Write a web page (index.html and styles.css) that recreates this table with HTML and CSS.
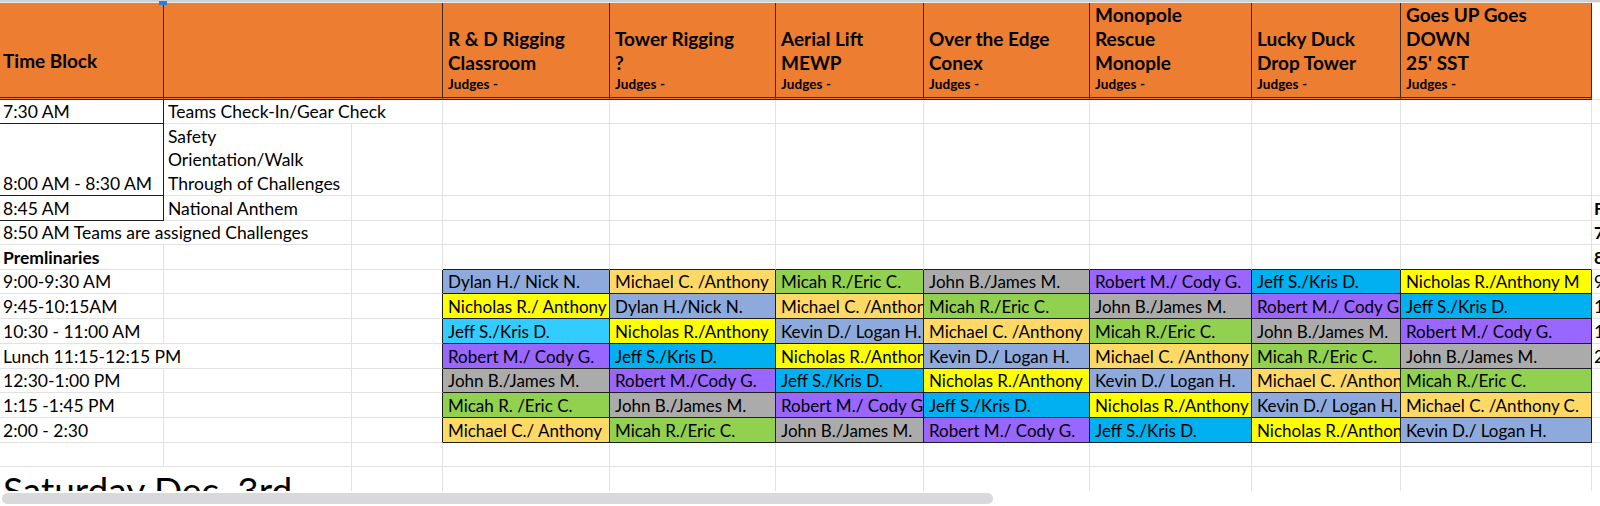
FILE: index.html
```html
<!DOCTYPE html>
<html>
<head>
<meta charset="utf-8">
<title>Schedule</title>
<link rel="stylesheet" href="styles.css">
</head>
<body>
<div class="window">
  <div class="topstrip"><span class="handle"></span></div>
  <div class="sheet">
    <table class="grid">
      <colgroup>
        <col class="c-a"><col class="c-b"><col class="c-c"><col class="c-d"><col class="c-e"><col class="c-f"><col class="c-g"><col class="c-h"><col class="c-i"><col class="c-j"><col class="c-k">
      </colgroup>
      <thead>
        <tr class="hdr">
          <th class="h tb">Time Block</th>
          <th class="h" colspan="2"></th>
          <th class="h"><div class="t">R &amp; D Rigging<br>Classroom</div><div class="j">Judges -</div></th>
          <th class="h"><div class="t">Tower Rigging<br>?</div><div class="j">Judges -</div></th>
          <th class="h"><div class="t">Aerial Lift<br>MEWP</div><div class="j">Judges -</div></th>
          <th class="h"><div class="t">Over the Edge<br>Conex</div><div class="j">Judges -</div></th>
          <th class="h"><div class="t">Monopole<br>Rescue<br>Monople</div><div class="j">Judges -</div></th>
          <th class="h"><div class="t">Lucky Duck<br>Drop Tower</div><div class="j">Judges -</div></th>
          <th class="h"><div class="t">Goes UP Goes<br>DOWN<br>25' SST</div><div class="j">Judges -</div></th>
          <th class="hk"></th>
        </tr>
      </thead>
      <tbody>
        <tr class="h24">
          <td class="boxed">7:30 AM</td>
          <td colspan="2">Teams Check-In/Gear Check</td>
          <td></td><td></td><td></td><td></td><td></td><td></td><td></td><td class="k"></td>
        </tr>
        <tr class="h72">
          <td class="boxed">8:00 AM - 8:30 AM</td>
          <td class="multi">Safety<br>Orientation/Walk<br>Through of Challenges</td>
          <td></td>
          <td></td><td></td><td></td><td></td><td></td><td></td><td></td><td class="k"></td>
        </tr>
        <tr class="h25">
          <td class="boxed">8:45 AM</td>
          <td>National Anthem</td>
          <td></td>
          <td></td><td></td><td></td><td></td><td></td><td></td><td></td><td class="k b">F</td>
        </tr>
        <tr class="h24">
          <td colspan="2">8:50 AM Teams are assigned Challenges</td>
          <td></td>
          <td></td><td></td><td></td><td></td><td></td><td></td><td></td><td class="k b">7</td>
        </tr>
        <tr class="h25">
          <td class="b">Premlinaries</td>
          <td></td>
          <td></td>
          <td class="ab"></td><td class="ab"></td><td class="ab"></td><td class="ab"></td><td class="ab"></td><td class="ab"></td><td class="ab"></td><td class="k b">8</td>
        </tr>
        <tr class="h24">
          <td>9:00-9:30 AM</td><td></td><td class="lb"></td>
          <td class="cb blu">Dylan H./ Nick N.</td>
          <td class="cb org">Michael C. /Anthony</td>
          <td class="cb grn">Micah R./Eric C.</td>
          <td class="cb gry">John B./James M.</td>
          <td class="cb pur">Robert M./ Cody G.</td>
          <td class="cb cyn">Jeff S./Kris D.</td>
          <td class="cb yel">Nicholas R./Anthony M</td>
          <td class="k">9</td>
        </tr>
        <tr class="h25">
          <td>9:45-10:15AM</td><td></td><td class="lb"></td>
          <td class="cb yel">Nicholas R./ Anthony</td>
          <td class="cb blu">Dylan H./Nick N.</td>
          <td class="cb org">Michael C. /Anthony</td>
          <td class="cb grn">Micah R./Eric C.</td>
          <td class="cb gry">John B./James M.</td>
          <td class="cb pur">Robert M./ Cody G</td>
          <td class="cb cyn">Jeff S./Kris D.</td>
          <td class="k">1</td>
        </tr>
        <tr class="h25">
          <td>10:30 - 11:00 AM</td><td></td><td class="lb"></td>
          <td class="cb cyl">Jeff S./Kris D.</td>
          <td class="cb yel">Nicholas R./Anthony</td>
          <td class="cb blu">Kevin D./ Logan H.</td>
          <td class="cb org">Michael C. /Anthony</td>
          <td class="cb grn">Micah R./Eric C.</td>
          <td class="cb gry">John B./James M.</td>
          <td class="cb pur">Robert M./ Cody G.</td>
          <td class="k">1</td>
        </tr>
        <tr class="h25">
          <td colspan="2">Lunch 11:15-12:15 PM</td><td class="lb"></td>
          <td class="cb pur">Robert M./ Cody G.</td>
          <td class="cb cyn">Jeff S./Kris D.</td>
          <td class="cb yel">Nicholas R./Anthony</td>
          <td class="cb blu">Kevin D./ Logan H.</td>
          <td class="cb org">Michael C. /Anthony</td>
          <td class="cb grn">Micah R./Eric C.</td>
          <td class="cb gry">John B./James M.</td>
          <td class="k">2</td>
        </tr>
        <tr class="h24">
          <td>12:30-1:00 PM</td><td></td><td class="lb"></td>
          <td class="cb gry">John B./James M.</td>
          <td class="cb pur">Robert M./Cody G.</td>
          <td class="cb cyn">Jeff S./Kris D.</td>
          <td class="cb yel">Nicholas R./Anthony</td>
          <td class="cb blu">Kevin D./ Logan H.</td>
          <td class="cb org">Michael C. /Anthony</td>
          <td class="cb grn">Micah R./Eric C.</td>
          <td class="k"></td>
        </tr>
        <tr class="h25">
          <td>1:15 -1:45 PM</td><td></td><td class="lb"></td>
          <td class="cb grn">Micah R. /Eric C.</td>
          <td class="cb gry">John B./James M.</td>
          <td class="cb pur">Robert M./ Cody G</td>
          <td class="cb cyn">Jeff S./Kris D.</td>
          <td class="cb yel">Nicholas R./Anthony</td>
          <td class="cb blu">Kevin D./ Logan H.</td>
          <td class="cb org">Michael C. /Anthony C.</td>
          <td class="k"></td>
        </tr>
        <tr class="h25">
          <td>2:00 - 2:30</td><td></td><td class="lb"></td>
          <td class="cb org">Michael C./ Anthony</td>
          <td class="cb grn">Micah R./Eric C.</td>
          <td class="cb gry">John B./James M.</td>
          <td class="cb pur">Robert M./ Cody G.</td>
          <td class="cb cyn">Jeff S./Kris D.</td>
          <td class="cb yel">Nicholas R./Anthony</td>
          <td class="cb blu">Kevin D./ Logan H.</td>
          <td class="k"></td>
        </tr>
        <tr class="h24">
          <td></td><td></td><td></td>
          <td></td><td></td><td></td><td></td><td></td><td></td><td></td><td class="k"></td>
        </tr>
        <tr class="hbig">
          <td colspan="2" class="big">Saturday Dec. 3rd</td><td></td>
          <td></td><td></td><td></td><td></td><td></td><td></td><td></td><td class="k"></td>
        </tr>
      </tbody>
    </table>
  </div>
  <div class="hscroll"><div class="thumb"></div></div>
</div>
</body>
</html>
```

FILE: styles.css
```css
* { box-sizing: border-box; }
html, body { margin: 0; padding: 0; background: #fff; }
body {
  font-family: "Lato", "Liberation Sans", sans-serif;
  color: #000;
  width: 1600px;
  height: 506px;
  overflow: hidden;
}
.window {
  position: relative;
  width: 1600px;
  height: 506px;
  display: flex;
  flex-direction: column;
}
.topstrip {
  flex: none;
  height: 3px;
  border-top: 2px solid #cfcfcf;
  background: #ececec;
}
.handle {
  position: absolute;
  left: 159px;
  top: 1px;
  width: 8px;
  height: 4px;
  background: #2d7ce3;
}
.sheet {
  flex: none;
  height: 488px;
  overflow: hidden;
}
.grid {
  border-collapse: separate;
  border-spacing: 0;
  table-layout: fixed;
  width: 1600px;
  font-size: 17.5px;
}
.c-a { width: 164px; }
.c-b { width: 188px; }
.c-c { width: 91px; }
.c-d { width: 167px; }
.c-e { width: 166px; }
.c-f { width: 148px; }
.c-g { width: 166px; }
.c-h { width: 162px; }
.c-i { width: 149px; }
.c-j { width: 191px; }
.c-k { width: 8px; }

.hdr { height: 95px; }
.h {
  background: #ed7d31;
  text-align: left;
  vertical-align: bottom;
  padding: 0 2px 3px 5px;
  border-right: 1px solid #3b2a1e;
  border-bottom: 3px double #2a2a2a;
  white-space: nowrap;
  overflow: hidden;
  font-weight: 400;
}
.h .t { font-weight: 700; font-size: 19px; line-height: 24px; }
.h .j { font-size: 13.5px; line-height: 19px; font-weight: 700; letter-spacing: 0.1px; }
.h.tb {
  font-weight: 700;
  font-size: 19px;
  line-height: 24px;
  padding-left: 3px;
  padding-bottom: 24px;
}
.hk {
  background: #fff;
  border-bottom: 1px solid #e2e2e2;
}

td {
  padding: 0 2px 0 4px;
  vertical-align: bottom;
  white-space: nowrap;
  overflow: hidden;
  line-height: 22px;
  border-right: 1px solid #e2e2e2;
  border-bottom: 1px solid #e2e2e2;
}
td:first-child { padding-left: 3px; }
.h24 { height: 24px; }
.h25 { height: 25px; }
.h72 { height: 72px; }
.hbig { height: 46px; }
.multi { line-height: 23.5px; }
.b { font-weight: 700; }
.k { padding: 0 0 0 2px; border-right: none; }
.big { font-size: 37px; line-height: 44px; padding-left: 3px; }

.boxed { border-right-color: #1e1e1e; border-bottom-color: #1e1e1e; }
.ab { border-bottom-color: #1e1e1e; }
.lb { border-right-color: #1e1e1e; }
.cb {
  border-right-color: #1e1e1e;
  border-bottom-color: #1e1e1e;
  padding-left: 5px;
  padding-right: 0;
  font-size: 17px;
}

.blu { background: #8ea9db; }
.org { background: #ffd966; }
.grn { background: #92d050; }
.gry { background: #ababab; }
.pur { background: #9966ff; }
.cyn { background: #00b0f0; }
.cyl { background: #33ccff; }
.yel { background: #ffff00; }

.hscroll {
  flex: none;
  height: 15px;
  padding: 2px 0 0 2px;
  background: #fff;
}
.thumb {
  width: 991px;
  height: 11px;
  border-radius: 6px;
  background: #d9d9db;
}
```
